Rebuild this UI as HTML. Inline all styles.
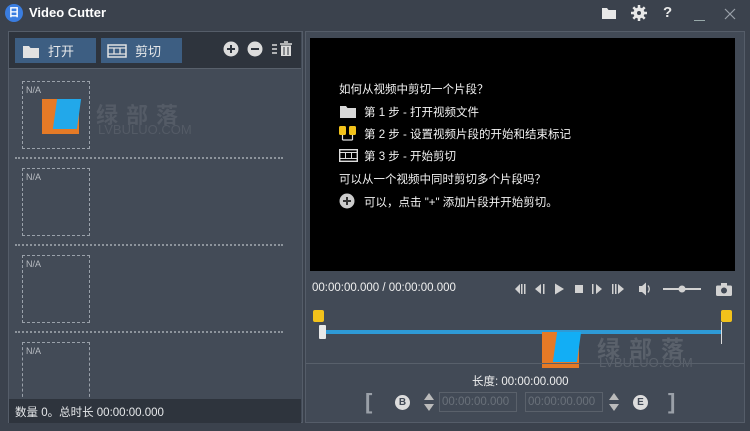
<!DOCTYPE html>
<html><head><meta charset="utf-8"><style>
*{margin:0;padding:0;box-sizing:border-box}
body{width:750px;height:431px;background:#3b424d;font-family:"Liberation Sans","Noto Sans CJK SC",sans-serif;color:#e6e8ea;position:relative;overflow:hidden;font-size:12px}
.abs{position:absolute}
.na{position:absolute;left:22px;width:68px;height:68px;border:1px dashed #9aa1aa;font-size:9px;color:#b8bcc2;padding:3px 0 0 3px}
.sep{position:absolute;left:15px;width:268px;border-top:2px dotted #8d949c}
.btn{position:absolute;top:38px;height:25px;width:81px;background:#3d5e82;font-size:13px;display:flex;align-items:center}
.tc{font-size:11.5px;color:#f0f0f0}
.txt{position:absolute;left:339px;font-size:11.5px;color:#f2f2f2}
</style></head><body>
<div class="abs" style="left:5px;top:4px;width:18px;height:18px;border-radius:50%;background:#3a7de0;color:#fff;font-size:11px;text-align:center;line-height:18px;font-weight:bold">日</div>
<div class="abs" style="left:29px;top:5px;font-size:13px;font-weight:bold;color:#fff">Video Cutter</div>
<svg class="abs" style="left:601px;top:6px" width="16" height="14"><path d="M1 2h5l1.5 2H15v9H1z" fill="#e8e8e8"/></svg>
<svg class="abs" style="left:631px;top:5px" width="16" height="16"><circle cx="8" cy="8" r="5.5" fill="#e8e8e8"/><g stroke="#e8e8e8" stroke-width="2.5"><path d="M8 0v16M0 8h16M2.3 2.3l11.4 11.4M13.7 2.3L2.3 13.7"/></g><circle cx="8" cy="8" r="2" fill="#3b424d"/></svg>
<div class="abs" style="left:663px;top:4px;font-size:15px;font-weight:bold;color:#e8e8e8">?</div>
<div class="abs" style="left:694px;top:20px;width:11px;border-top:1px solid #9aa"></div>
<svg class="abs" style="left:724px;top:8px" width="12" height="12"><path d="M1 1L11 11M11 1L1 11" stroke="#9aa1aa" stroke-width="1.2"/></svg>

<div class="abs" style="left:8px;top:31px;width:295px;height:392px;background:#434b57;border:1px solid #555d69"></div>
<div class="abs" style="left:9px;top:32px;width:292px;height:36px;background:#2e343d"></div>
<div class="btn" style="left:15px"><svg style="margin:0 8px 0 7px" width="18" height="14"><path d="M1 2h6l1.5 2H17v10H1z" fill="#e2e2e2"/></svg>打开</div>
<div class="btn" style="left:101px"><svg style="margin:0 8px 0 6px" width="20" height="14"><rect x="1" y="1" width="18" height="12" fill="none" stroke="#e2e2e2" stroke-width="1.5"/><path d="M1 4h18M1 10h18M7 4v6M13 4v6" stroke="#e2e2e2" stroke-width="1.3"/></svg>剪切</div>
<svg class="abs" style="left:223px;top:41px" width="16" height="16"><circle cx="8" cy="8" r="7.5" fill="#dcdcdc"/><path d="M4 8h8M8 4v8" stroke="#2e343d" stroke-width="2"/></svg>
<svg class="abs" style="left:247px;top:41px" width="16" height="16"><circle cx="8" cy="8" r="7.5" fill="#dcdcdc"/><path d="M4 8h8" stroke="#2e343d" stroke-width="2"/></svg>
<svg class="abs" style="left:271px;top:41px" width="24" height="16"><path d="M1 4h5M1 8h5M1 12h5" stroke="#dcdcdc" stroke-width="1.5"/><path d="M9 3h12M13 1h4" stroke="#dcdcdc" stroke-width="1.5"/><rect x="10" y="4.5" width="10" height="10.5" fill="#dcdcdc"/><path d="M13 6v8M17 6v8" stroke="#2e343d"/></svg>
<div class="abs" style="left:9px;top:68px;width:292px;border-top:1px solid #58606b"></div>

<div class="na" style="top:81px">N/A</div>
<div class="sep" style="top:157px"></div>
<div class="na" style="top:168px">N/A</div>
<div class="sep" style="top:244px"></div>
<div class="na" style="top:255px">N/A</div>
<div class="sep" style="top:331px"></div>
<div class="na" style="top:342px;height:60px;border-bottom:none">N/A</div>
<div class="abs" style="left:42px;top:99px;width:37px;height:35px;background:#e57a26"></div>
<div class="abs" style="left:55px;top:99px;width:24px;height:30px;background:#22a8ea;transform:skewX(-8deg)"></div>
<div class="abs" style="left:96px;top:98px;font-size:22px;color:#545b66;letter-spacing:8px;font-weight:bold">绿部落</div>
<div class="abs" style="left:98px;top:122px;font-size:13px;color:#545b66">LVBULUO.COM</div>

<div class="abs" style="left:9px;top:399px;width:292px;height:24px;background:#2e343d"></div>
<div class="abs" style="left:15px;top:404px;font-size:11.5px">数量 0。总时长 00:00:00.000</div>

<div class="abs" style="left:305px;top:31px;width:440px;height:392px;background:#424a56;border:1px solid #555d69"></div>
<div class="abs" style="left:310px;top:38px;width:425px;height:233px;background:#000"></div>
<div class="txt" style="top:81px">如何从视频中剪切一个片段？</div>
<svg class="abs" style="left:339px;top:104px" width="18" height="14"><path d="M1 2h6l1.5 2H17v10H1z" fill="#d8d8d8"/></svg>
<div class="txt" style="left:364px;top:104px">第 1 步 - 打开视频文件</div>
<svg class="abs" style="left:339px;top:125px" width="18" height="17"><rect x="0" y="1" width="7" height="9" rx="1.5" fill="#f2c21b"/><rect x="10" y="1" width="7" height="9" rx="1.5" fill="#f2c21b"/><path d="M3.5 10v5M13.5 10v5M3.5 15h10" stroke="#ddd" stroke-width="1.2"/></svg>
<div class="txt" style="left:364px;top:126px">第 2 步 - 设置视频片段的开始和结束标记</div>
<svg class="abs" style="left:339px;top:149px" width="19" height="13"><rect x="0.7" y="0.7" width="17.6" height="11.6" fill="none" stroke="#ddd" stroke-width="1.4"/><path d="M1 3.5h17M1 9.5h17M6.5 3.5v6M12.5 3.5v6" stroke="#ddd"/></svg>
<div class="txt" style="left:364px;top:148px">第 3 步 - 开始剪切</div>
<div class="txt" style="top:171px">可以从一个视频中同时剪切多个片段吗？</div>
<svg class="abs" style="left:339px;top:193px" width="16" height="16"><circle cx="8" cy="8" r="7.5" fill="#ccc"/><path d="M4 8h8M8 4v8" stroke="#333" stroke-width="2"/></svg>
<div class="txt" style="left:364px;top:194px">可以，点击 "+" 添加片段并开始剪切。</div>

<div class="abs tc" style="left:312px;top:282px">00:00:00.000 / 00:00:00.000</div>
<svg class="abs" style="left:510px;top:280px" width="225" height="18" fill="#d2d2d2">
  <path d="M5 9l5-5v10z"/><rect x="11" y="4" width="1.5" height="10"/><rect x="14" y="4" width="1.5" height="10"/>
  <path d="M25 9l6-5v10z"/><rect x="33" y="4" width="1.5" height="10"/>
  <path d="M45 3.5l9 5.5-9 5.5z"/>
  <rect x="65" y="5" width="8" height="8"/>
  <rect x="82" y="4" width="1.5" height="10"/><path d="M86 4l6 5-6 5z"/>
  <rect x="102" y="4" width="1.5" height="10"/><rect x="105" y="4" width="1.5" height="10"/><path d="M108 4l6 5-6 5z"/>
  <path d="M129 6h3l4-3.5v13l-4-3.5h-3z"/><path d="M138 5.5q2.5 3.5 0 7" stroke="#d2d2d2" fill="none" stroke-width="1.3"/>
  <rect x="153" y="8" width="38" height="2"/><circle cx="172" cy="9" r="3.5"/>
  <rect x="206" y="5.5" width="16" height="10.5" rx="1.5"/><rect x="211" y="3" width="6" height="3"/><circle cx="214" cy="10.5" r="3" fill="#424a56"/>
</svg>

<div class="abs" style="left:313px;top:310px;width:11px;height:12px;background:#f2c21b;border-radius:2px"></div>
<div class="abs" style="left:721px;top:310px;width:11px;height:12px;background:#f2c21b;border-radius:2px"></div>
<div class="abs" style="left:322px;top:330px;width:400px;height:4px;background:#2e9ad6"></div>
<div class="abs" style="left:319px;top:325px;width:7px;height:14px;background:#e8e8e8;border-radius:1px"></div>
<div class="abs" style="left:721px;top:322px;width:1px;height:22px;background:#ddd"></div>
<div class="abs" style="left:542px;top:332px;width:37px;height:36px;background:#e57a26"></div>
<div class="abs" style="left:555px;top:332px;width:24px;height:30px;background:#12aef5;transform:skewX(-8deg)"></div>
<div class="abs" style="left:597px;top:330px;font-size:23px;color:#5a616b;letter-spacing:9px;font-weight:bold">绿部落</div>
<div class="abs" style="left:599px;top:355px;font-size:13px;color:#5a616b">LVBULUO.COM</div>

<div class="abs" style="left:306px;top:363px;width:438px;border-top:1px solid #58606b"></div>
<div class="abs tc" style="left:472px;top:373px">长度: 00:00:00.000</div>
<div class="abs" style="left:365px;top:389px;font-size:22px;color:#9aa0a8;font-weight:bold">[</div>
<div class="abs" style="left:668px;top:389px;font-size:22px;color:#9aa0a8;font-weight:bold">]</div>
<div class="abs" style="left:395px;top:395px;width:15px;height:15px;border-radius:50%;background:#ddd;color:#424a56;font-size:10px;font-weight:bold;text-align:center;line-height:15px">B</div>
<div class="abs" style="left:633px;top:395px;width:15px;height:15px;border-radius:50%;background:#ddd;color:#424a56;font-size:10px;font-weight:bold;text-align:center;line-height:15px">E</div>
<svg class="abs" style="left:423px;top:392px" width="12" height="20"><path d="M6 1l5 7H1zM6 19l5-7H1z" fill="#bbb"/></svg>
<svg class="abs" style="left:608px;top:392px" width="12" height="20"><path d="M6 1l5 7H1zM6 19l5-7H1z" fill="#bbb"/></svg>
<div class="abs" style="left:439px;top:392px;width:78px;height:20px;border:1px solid #5a616b;color:#6a717a;font-size:11.5px;padding:3px 0 0 2px">00:00:00.000</div>
<div class="abs" style="left:525px;top:392px;width:78px;height:20px;border:1px solid #5a616b;color:#6a717a;font-size:11.5px;padding:3px 0 0 2px">00:00:00.000</div>
</body></html>
